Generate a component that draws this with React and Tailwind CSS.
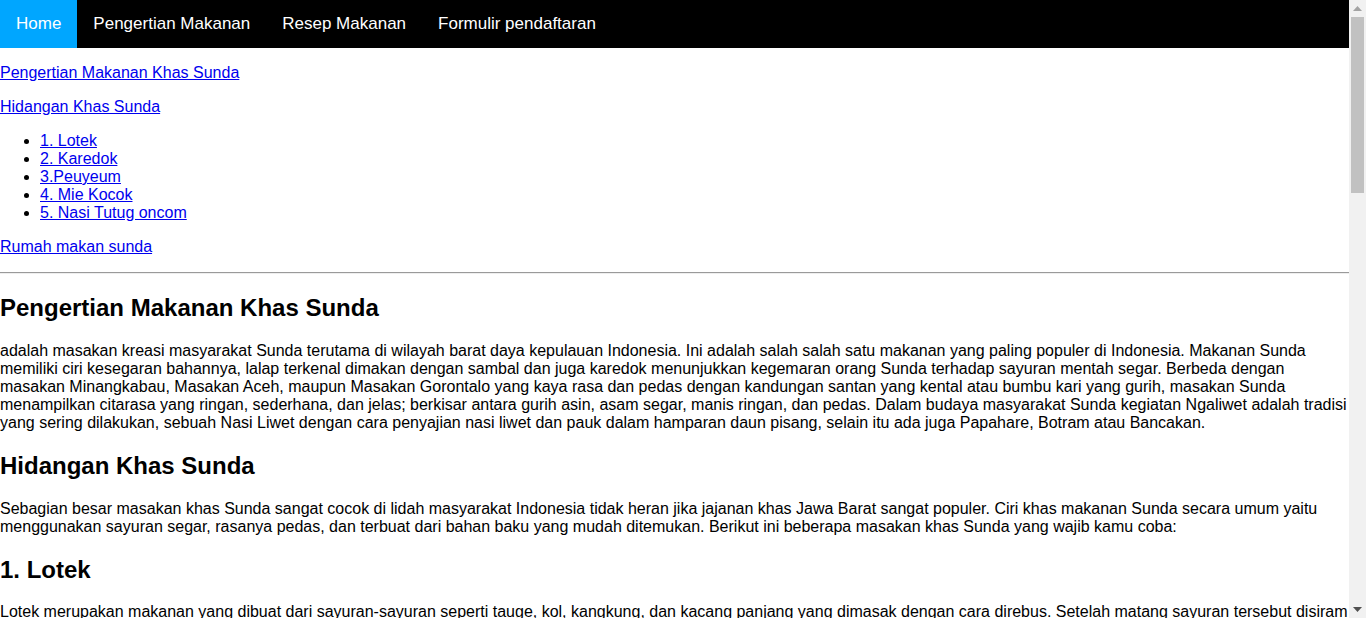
import React from 'react';

const navItems = ['Home', 'Pengertian Makanan', 'Resep Makanan', 'Formulir pendaftaran'];
const dishes = ['1. Lotek', '2. Karedok', '3.Peuyeum', '4. Mie Kocok', '5. Nasi Tutug oncom'];

function Scrollbar() {
  return (
    <div className="w-[17px] shrink-0 bg-[#f1f1f1] flex flex-col">
      <div className="h-[17px] flex items-center justify-center">
        <svg width="9" height="5" viewBox="0 0 9 5"><path d="M4.5 0 L9 5 L0 5 Z" fill="#a3a3a3" /></svg>
      </div>
      <div className="mx-[2px] h-[176px] bg-[#c1c1c1]"></div>
      <div className="flex-1"></div>
      <div className="h-[17px] flex items-center justify-center">
        <svg width="9" height="5" viewBox="0 0 9 5"><path d="M0 0 L9 0 L4.5 5 Z" fill="#505050" /></svg>
      </div>
    </div>
  );
}

export default function App() {
  return (
    <div className="flex h-screen overflow-hidden bg-white">
      <div className="flex-1 min-w-0 overflow-hidden text-black text-[16px] leading-[normal] font-['Liberation_Sans',Arial,sans-serif]">
        <nav className="flex h-12 bg-black">
          {navItems.map((item, i) => (
            <a
              key={item}
              href="#"
              className={`flex items-center px-4 text-[17px] text-white ${i === 0 ? 'bg-[#00a6ff]' : ''}`}
            >
              {item}
            </a>
          ))}
        </nav>

        <div>
          <p className="my-4"><a href="#" className="text-[#0000ee] underline">Pengertian Makanan Khas Sunda</a></p>
          <p className="my-4"><a href="#" className="text-[#0000ee] underline">Hidangan Khas Sunda</a></p>
          <ul className="my-4 pl-10 list-disc">
            {dishes.map((d) => (
              <li key={d}><a href="#" className="text-[#0000ee] underline">{d}</a></li>
            ))}
          </ul>
          <p className="my-4"><a href="#" className="text-[#0000ee] underline">Rumah makan sunda</a></p>
          <hr className="my-2 h-0 border-t border-b border-t-[#9a9a9a] border-b-[#eeeeee]" />

          <h2 className="my-[19.92px] text-[24px] font-bold">Pengertian Makanan Khas Sunda</h2>
          <p className="my-4">
            adalah masakan kreasi masyarakat Sunda terutama di wilayah barat daya kepulauan Indonesia. Ini adalah salah salah satu makanan yang paling populer di Indonesia. Makanan Sunda memiliki ciri kesegaran bahannya, lalap terkenal dimakan dengan sambal dan juga karedok menunjukkan kegemaran orang Sunda terhadap sayuran mentah segar. Berbeda dengan masakan Minangkabau, Masakan Aceh, maupun Masakan Gorontalo yang kaya rasa dan pedas dengan kandungan santan yang kental atau bumbu kari yang gurih, masakan Sunda menampilkan citarasa yang ringan, sederhana, dan jelas; berkisar antara gurih asin, asam segar, manis ringan, dan pedas. Dalam budaya masyarakat Sunda kegiatan Ngaliwet adalah tradisi yang sering dilakukan, sebuah Nasi Liwet dengan cara penyajian nasi liwet dan pauk dalam hamparan daun pisang, selain itu ada juga Papahare, Botram atau Bancakan.
          </p>

          <h2 className="my-[19.92px] text-[24px] font-bold">Hidangan Khas Sunda</h2>
          <p className="my-4">
            Sebagian besar masakan khas Sunda sangat cocok di lidah masyarakat Indonesia tidak heran jika jajanan khas Jawa Barat sangat populer. Ciri khas makanan Sunda secara umum yaitu menggunakan sayuran segar, rasanya pedas, dan terbuat dari bahan baku yang mudah ditemukan. Berikut ini beberapa masakan khas Sunda yang wajib kamu coba:
          </p>

          <h2 className="my-[19.92px] text-[24px] font-bold">1. Lotek</h2>
          <p className="my-4">
            Lotek merupakan makanan yang dibuat dari sayuran-sayuran seperti tauge, kol, kangkung, dan kacang panjang yang dimasak dengan cara direbus. Setelah matang sayuran tersebut disiram dengan bumbu kacang yang diulek bersama cabai, bawang putih, kencur, dan gula merah.
          </p>
        </div>
      </div>
      <Scrollbar />
    </div>
  );
}
